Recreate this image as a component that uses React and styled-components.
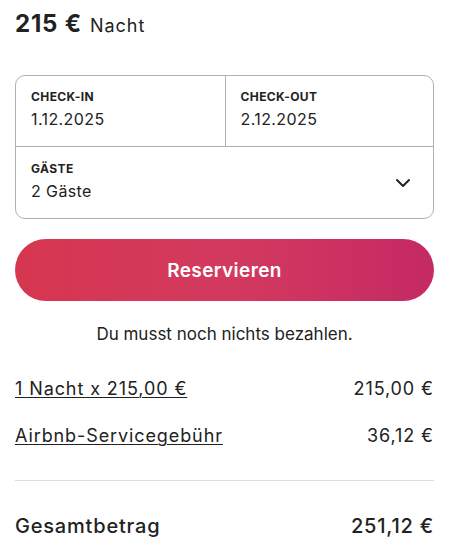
import React from "react";
import styled, { createGlobalStyle } from "styled-components";

const Global = createGlobalStyle`
  html, body { margin: 0; padding: 0; background: #fff; }
  body { font-family: Inter, "Noto Sans", sans-serif; color: #222; -webkit-font-smoothing: antialiased; }
`;

const Page = styled.div`
  width: 450px;
  box-sizing: border-box;
  padding: 9px 16px 0 15px;
`;

const PriceLine = styled.div`
  display: flex;
  align-items: baseline;
  gap: 8px;
  height: 30px;
  line-height: 30px;
`;

const Price = styled.span`
  font-size: 24px;
  font-weight: 700;
  letter-spacing: 0.8px;
`;

const Per = styled.span`
  font-size: 18px;
  font-weight: 400;
  letter-spacing: 1px;
`;

const Picker = styled.div`
  margin-top: 36px;
  border: 1px solid #b0b0b0;
  border-radius: 10px;
  display: grid;
  grid-template-columns: 1fr 1fr;
  overflow: hidden;
`;

const Cell = styled.div`
  box-sizing: border-box;
  height: ${(p) => p.h}px;
  padding: ${(p) => p.pt}px 22px 0 15px;
  display: flex;
  align-items: center;
  justify-content: space-between;
  grid-column: ${(p) => (p.wide ? "1 / span 2" : "auto")};
  border-left: ${(p) => (p.divider ? "1px solid #b0b0b0" : "none")};
  border-top: ${(p) => (p.top ? "1px solid #b0b0b0" : "none")};
`;

const CellText = styled.div`
  display: flex;
  flex-direction: column;
  align-self: flex-start;
`;

const Label = styled.div`
  font-size: 12px;
  font-weight: 700;
  line-height: 14px;
  text-transform: uppercase;
  letter-spacing: 0.4px;
`;

const Value = styled.div`
  font-size: 16px;
  line-height: 20px;
  margin-top: 5px;
  letter-spacing: 0.4px;
`;

const Chevron = styled.svg`
  width: 16px;
  height: 16px;
  flex: none;
  margin-top: ${(p) => -p.offset}px;
`;

const Button = styled.button`
  display: block;
  width: 100%;
  height: 62px;
  margin-top: 20px;
  border: none;
  border-radius: 31px;
  background: linear-gradient(90deg, #d6364f 0%, #d33a5f 50%, #c42a63 100%);
  color: #fff;
  font-family: Inter, "Noto Sans", sans-serif;
  font-size: 19px;
  font-weight: 600;
  letter-spacing: 0.4px;
  cursor: pointer;
`;

const Note = styled.div`
  text-align: center;
  font-size: 17px;
  margin-top: 23px;
  line-height: 20px;
`;

const Rows = styled.div`
  margin-top: 33px;
  display: flex;
  flex-direction: column;
  gap: 23px;
`;

const Row = styled.div`
  display: flex;
  justify-content: space-between;
  align-items: baseline;
  font-size: ${(p) => (p.total ? 20 : 18)}px;
  line-height: 24px;
  letter-spacing: ${(p) => (p.total ? 0.8 : 0.9)}px;
  font-weight: ${(p) => (p.total ? 500 : 400)};
`;

const Link = styled.span`
  text-decoration: underline;
  text-decoration-thickness: 1px;
  text-underline-offset: 2px;
`;

const Divider = styled.hr`
  border: none;
  border-top: 1px solid #dddddd;
  margin: 32px 0 33px;
`;

export default function App() {
  return (
    <>
      <Global />
      <Page>
        <PriceLine>
          <Price>215 €</Price>
          <Per>Nacht</Per>
        </PriceLine>
        <Picker>
          <Cell h={70} pt={14}>
            <CellText>
              <Label>Check-in</Label>
              <Value>1.12.2025</Value>
            </CellText>
          </Cell>
          <Cell h={70} pt={14} divider>
            <CellText>
              <Label>Check-out</Label>
              <Value>2.12.2025</Value>
            </CellText>
          </Cell>
          <Cell h={72} pt={15} wide top>
            <CellText>
              <Label>Gäste</Label>
              <Value>2 Gäste</Value>
            </CellText>
            <Chevron offset={14} viewBox="0 0 16 16" fill="none" stroke="#222" strokeWidth="2" strokeLinecap="round" strokeLinejoin="round">
              <path d="M2 5l6 6 6-6" />
            </Chevron>
          </Cell>
        </Picker>
        <Button>Reservieren</Button>
        <Note>Du musst noch nichts bezahlen.</Note>
        <Rows>
          <Row>
            <Link>1 Nacht x 215,00 €</Link>
            <span>215,00 €</span>
          </Row>
          <Row>
            <Link>Airbnb-Servicegebühr</Link>
            <span>36,12 €</span>
          </Row>
        </Rows>
        <Divider />
        <Row total>
          <span>Gesamtbetrag</span>
          <span>251,12 €</span>
        </Row>
      </Page>
    </>
  );
}
